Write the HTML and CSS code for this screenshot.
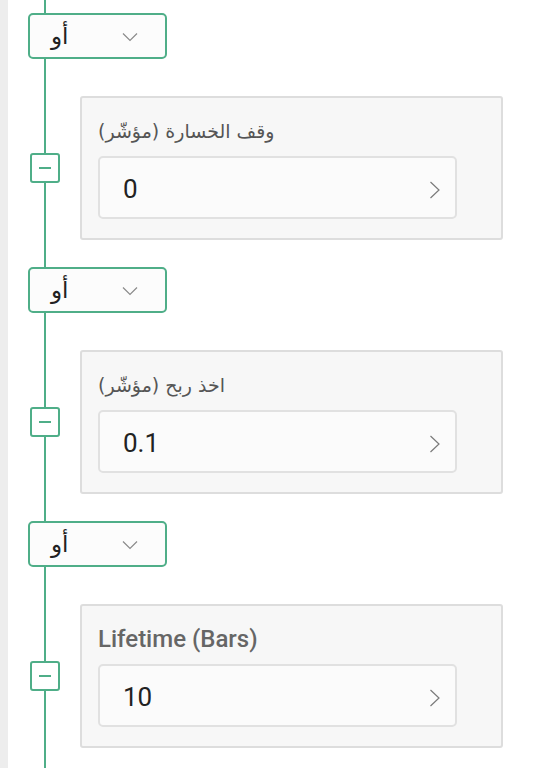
FILE: index.html
```html
<!DOCTYPE html>
<html lang="ar">
<head>
<meta charset="utf-8">
<link rel="stylesheet" href="styles.css">
</head>
<body>
<div class="strip"></div>
<main class="chain">
  <div class="logic">
    <span class="logic-text">أو</span>
    <svg class="chev-down" width="16" height="10" viewBox="0 0 16 10"><path d="M1 1.5 L8 8.5 L15 1.5" fill="none" stroke="#8a8a8a" stroke-width="1.2"/></svg>
  </div>
  <div class="row">
    <button class="remove"><span class="bar"></span></button>
    <section class="card">
      <div class="label ar" dir="rtl">وقف الخسارة (مؤشّر)</div>
      <div class="field">
        <span class="value">0</span>
        <svg class="chev-right" width="12" height="18" viewBox="0 0 12 18"><path d="M1.5 1 L10 9 L1.5 17" fill="none" stroke="#7a7a7a" stroke-width="1.2"/></svg>
      </div>
    </section>
  </div>
  <div class="logic">
    <span class="logic-text">أو</span>
    <svg class="chev-down" width="16" height="10" viewBox="0 0 16 10"><path d="M1 1.5 L8 8.5 L15 1.5" fill="none" stroke="#8a8a8a" stroke-width="1.2"/></svg>
  </div>
  <div class="row">
    <button class="remove"><span class="bar"></span></button>
    <section class="card">
      <div class="label ar" dir="rtl">اخذ ربح (مؤشّر)</div>
      <div class="field">
        <span class="value">0.1</span>
        <svg class="chev-right" width="12" height="18" viewBox="0 0 12 18"><path d="M1.5 1 L10 9 L1.5 17" fill="none" stroke="#7a7a7a" stroke-width="1.2"/></svg>
      </div>
    </section>
  </div>
  <div class="logic">
    <span class="logic-text">أو</span>
    <svg class="chev-down" width="16" height="10" viewBox="0 0 16 10"><path d="M1 1.5 L8 8.5 L15 1.5" fill="none" stroke="#8a8a8a" stroke-width="1.2"/></svg>
  </div>
  <div class="row">
    <button class="remove"><span class="bar"></span></button>
    <section class="card">
      <div class="label">Lifetime (Bars)</div>
      <div class="field">
        <span class="value">10</span>
        <svg class="chev-right" width="12" height="18" viewBox="0 0 12 18"><path d="M1.5 1 L10 9 L1.5 17" fill="none" stroke="#7a7a7a" stroke-width="1.2"/></svg>
      </div>
    </section>
  </div>
</main>
</body>
</html>
```

FILE: styles.css
```css
html, body {
  margin: 0;
  padding: 0;
  height: 100%;
  background: #ffffff;
  font-family: Roboto, "DejaVu Sans", sans-serif;
  overflow: hidden;
}

body {
  display: flex;
}

.strip {
  width: 8px;
  flex: none;
  background: #ededed;
}

.chain {
  flex: 1;
  padding: 13px 37px 0 20px;
  background: linear-gradient(#4fae88, #4fae88) no-repeat 36px 0 / 2px 100%;
  display: flex;
  flex-direction: column;
}

.logic {
  flex: none;
  box-sizing: border-box;
  width: 139px;
  height: 46px;
  border: 2px solid #4fae88;
  border-radius: 5px;
  background: #fcfcfc;
  display: flex;
  align-items: center;
  padding-left: 21px;
  margin-bottom: 37px;
}

.logic-text {
  font-family: "DejaVu Sans", sans-serif;
  font-size: 23px;
  color: #222;
  width: 71px;
  line-height: 28px;
}

.chev-down {
  margin-top: 2px;
}

.row {
  flex: none;
  display: flex;
  align-items: center;
  margin-bottom: 27px;
}

.remove {
  box-sizing: border-box;
  width: 30px;
  height: 30px;
  margin-left: 2px;
  margin-right: 20px;
  padding: 0;
  border: 2px solid #4fae88;
  border-radius: 3px;
  background: #ffffff;
  display: flex;
  align-items: center;
  justify-content: center;
  flex: none;
}

.bar {
  display: block;
  width: 12px;
  height: 2px;
  background: #4fae88;
}

.card {
  box-sizing: border-box;
  flex: 1;
  height: 144px;
  border: 2px solid #dddddd;
  border-radius: 3px;
  background: #f7f7f7;
  padding: 19px 44px 19px 16px;
}

.label {
  font-size: 24px;
  line-height: 28px;
  font-weight: 500;
  color: #666666;
  margin-bottom: 11px;
  text-align: left;
}

.label.ar {
  font-family: "DejaVu Sans", sans-serif;
  font-weight: 400;
  font-size: 19px;
  color: #555555;
  text-align: right;
  width: max-content;
}

.field {
  box-sizing: border-box;
  height: 63px;
  border: 2px solid #e1e1e1;
  border-radius: 5px;
  background: #fbfbfb;
  display: flex;
  align-items: center;
  justify-content: space-between;
  padding: 2px 14px 0 23px;
}

.value {
  font-size: 26px;
  color: #222222;
}

.chev-right {
  margin-top: 2px;
}
```
